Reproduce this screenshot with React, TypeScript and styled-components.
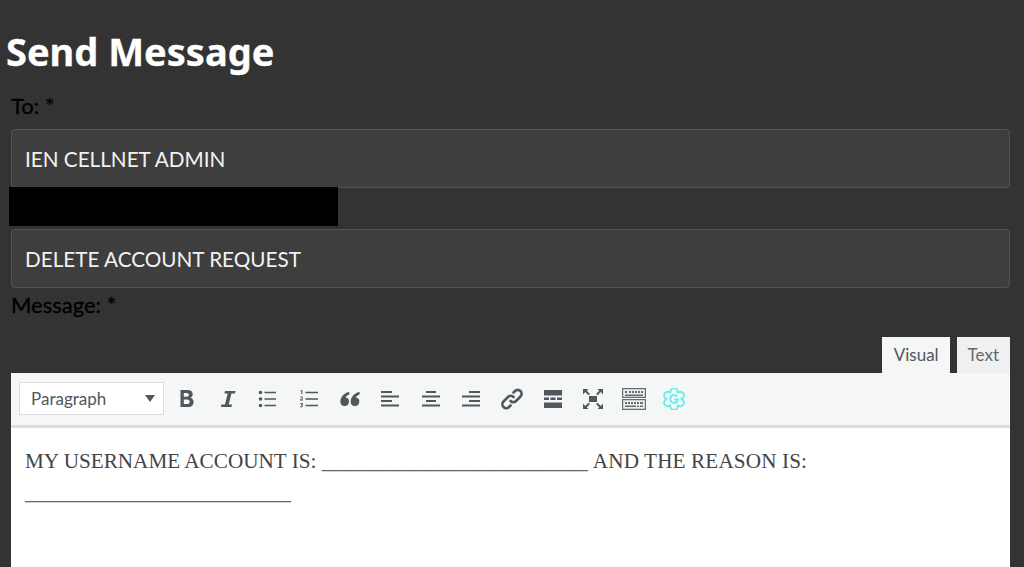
import { createGlobalStyle, styled } from "styled-components";

const GlobalStyle = createGlobalStyle`
  html, body {
    margin: 0;
    padding: 0;
    height: 100%;
    overflow: hidden;
    background: #333333;
  }
`;

const ICON = "#50575e";

const BoldIcon = () => (
  <svg width="20" height="20" viewBox="0 0 20 20" fill={ICON}>
    <path fillRule="evenodd" d="M3.500 1h7.200c3 0 5 1.600 5 4.200 0 1.700-.9 3-2.400 3.600 2.100.5 3.300 2 3.300 4.100 0 3-2.200 5.100-5.400 5.100H3.500zm3.300 2.900v3.900h2.900c1.300 0 2.200-.8 2.200-2s-.9-1.900-2.200-1.900zm0 6.500v4.700h3.400c1.500 0 2.500-.9 2.500-2.300s-1-2.400-2.500-2.400z" />
  </svg>
);

const ItalicIcon = () => (
  <svg width="20" height="20" viewBox="0 0 20 20" fill={ICON}>
    <path d="M7 2h10.500l-.6 2.400h-3.500L10.700 15.600h3.300l-.6 2.400H2.900l.6-2.400H7L9.700 4.400H6.400z" />
  </svg>
);

const BulletIcon = () => (
  <svg width="20" height="20" viewBox="0 0 20 20" fill={ICON}>
    <circle cx="2.500" cy="3.500" r="1.800" />
    <circle cx="2.500" cy="10" r="1.800" />
    <circle cx="2.500" cy="16.500" r="1.800" />
    <path d="M6.500 2.800H18v1.400H6.500zM6.500 9.300H18v1.400H6.500zM6.500 15.800H18v1.400H6.500z" />
  </svg>
);

const NumberIcon = () => (
  <svg width="20" height="20" viewBox="0 0 20 20" fill={ICON}>
    <path d="M6.500 2.800H19v1.400H6.500zM6.500 9.300H19v1.400H6.500zM6.500 15.800H19v1.400H6.500z" />
    <path d="M2 1h1.300v4.300H2.300V2.100l-.9.300zM1 7.900c.8-.6 3-.7 3 .8 0 .9-1 1.300-1.800 1.900H4v.9H1v-.8c.8-.8 2-1.300 2-2 0-.6-1-.5-1.800 0zM1.200 14H4v.7l-1 .9c1.500.2 1.300 2.800-.9 2.800-.4 0-.8-.1-1.100-.3v-.8c.7.400 1.900.400 1.900-.4 0-.5-.5-.7-1.100-.6v-.7l1-.8H1.200z" />
  </svg>
);

const QuoteIcon = () => (
  <svg width="20" height="20" viewBox="0 0 20 20" fill={ICON}>
    <path d="M9.300 3C5 3.500.4 7.500.4 12.700a4.300 4.300 0 1 0 5.200-4.200c.5-1.200 1.900-2.300 3.700-2.900z" />
    <path d="M19.600 3c-4.300.5-8.900 4.500-8.900 9.700a4.300 4.300 0 1 0 5.200-4.200c.5-1.200 1.900-2.300 3.700-2.900z" />
  </svg>
);

const AlignLeftIcon = () => (
  <svg width="20" height="20" viewBox="0 0 20 20" fill={ICON}>
    <path d="M1 2h11v2H1zM1 6.500h18v2H1zM1 11h11v2H1zM1 15.500h18v2H1z" />
  </svg>
);

const AlignCenterIcon = () => (
  <svg width="20" height="20" viewBox="0 0 20 20" fill={ICON}>
    <path d="M5 2h10v2H5zM1 6.500h18v2H1zM5 11h10v2H5zM1 15.500h18v2H1z" />
  </svg>
);

const AlignRightIcon = () => (
  <svg width="20" height="20" viewBox="0 0 20 20" fill={ICON}>
    <path d="M8 2h11v2H8zM1 6.500h18v2H1zM8 11h11v2H8zM1 15.500h18v2H1z" />
  </svg>
);

const LinkIcon = () => (
  <svg width="24" height="24" viewBox="0 0 24 24" fill="none" stroke={ICON} strokeWidth="2.600" strokeLinecap="round">
    <path d="M10.500 14a3.800 3.800 0 0 0 5.500 0l4.500-4.500a3.800 3.800 0 0 0-5.500-5.500L13.500 5.500" />
    <path d="M13.500 10a3.800 3.800 0 0 0-5.500 0l-4.500 4.500a3.800 3.800 0 0 0 5.500 5.500l1.500-1.500" />
  </svg>
);

const MoreIcon = () => (
  <svg width="20" height="20" viewBox="0 0 20 20" fill={ICON}>
    <path d="M1 1h18v5.500H1zM1 8.500h5v2.500H1zM7.500 8.500h5v2.500h-5zM14 8.500h5v2.500h-5zM1 13.500h18V19H1z" />
  </svg>
);

const FullscreenIcon = () => (
  <svg width="22" height="22" viewBox="0 0 22 22" fill={ICON}>
    <path d="M7 8h8v6H7z" />
    <path d="M1 1h5.500L4.800 2.700 8 6 6.500 7.300 3.200 4.100 1 6.500zM21 1v5.500l-2.200-2.400-3.300 3.200L14 6l3.200-3.300L15.500 1zM1 21v-5.500l2.200 2.400 3.300-3.200L8 16l-3.200 3.300L6.500 21zM21 21h-5.500l1.700-1.700L14 16l1.500-1.300 3.300 3.200 2.200-2.400z" />
  </svg>
);

const KeyboardIcon = () => (
  <svg width="24" height="22" viewBox="0 0 24 22">
    <path fill="#666d73" d="M0 0h24v10H0zM0 11h24v11H0z" />
    <path fill="#eef0f0" d="M1.200 1.200h21.600v7.600H1.200zM1.200 12.200h21.600v8.600H1.200z" />
    <path fill="#666d73" d="M3 3h2v2H3zM7 3h2v2H7zM10 3h2v2h-2zM13 3h2v2h-2zM16 3h2v2h-2zM19 3h2v2h-2zM3 6.500h18V8H3z" />
    <path fill="#666d73" d="M3 14h2v2H3zM6 14h2v2H6zM9 14h2v2H9zM12 14h2v2h-2zM15 14h2v2h-2zM18 14h3v2h-3zM3 17.500h11v1.500H3zM15 17.500h2v1.500h-2zM18 17.500h3v1.500h-3z" />
  </svg>
);

const GrammarlyIcon = () => (
  <svg width="22" height="22" viewBox="0 0 24 24" fill="none" stroke="#66eeee" strokeWidth="2">
    <path d="M15.750 5.500A4 4 0 1 1 19.500 12 4 4 0 1 1 15.750 18.500 4 4 0 1 1 8.250 18.500 4 4 0 1 1 4.500 12 4 4 0 1 1 8.250 5.500 4 4 0 1 1 15.750 5.500z" />
    <path d="M15.500 9.500a4.300 4.300 0 1 0 .8 3h-3.800" strokeWidth="2.200" />
  </svg>
);

const TOOLS = [
  { key: "bold", icon: <BoldIcon /> },
  { key: "italic", icon: <ItalicIcon /> },
  { key: "bullet", icon: <BulletIcon /> },
  { key: "number", icon: <NumberIcon /> },
  { key: "quote", icon: <QuoteIcon /> },
  { key: "left", icon: <AlignLeftIcon /> },
  { key: "center", icon: <AlignCenterIcon /> },
  { key: "right", icon: <AlignRightIcon /> },
  { key: "link", icon: <LinkIcon /> },
  { key: "more", icon: <MoreIcon /> },
  { key: "fullscreen", icon: <FullscreenIcon /> },
  { key: "keyboard", icon: <KeyboardIcon /> },
  { key: "grammarly", icon: <GrammarlyIcon /> },
];

export default function App() {
  return (
    <Page>
      <GlobalStyle />
      <Title>Send Message</Title>
      <Form>
        <Label>To: *</Label>
        <Field>IEN CELLNET ADMIN</Field>
        <Redaction />
        <Field>DELETE ACCOUNT REQUEST</Field>
        <Label $top={4}>Message: *</Label>
        <Tabs>
          <Tab $active>Visual</Tab>
          <Tab>Text</Tab>
        </Tabs>
        <Editor>
          <Toolbar>
            <Select>
              <span>Paragraph</span>
              <Caret />
            </Select>
            <Tools>
              {TOOLS.map((tool) => (
                <ToolButton key={tool.key}>{tool.icon}</ToolButton>
              ))}
            </Tools>
          </Toolbar>
          <Content>
            MY USERNAME ACCOUNT IS: <Blank>_________________________</Blank> <Tail>AND THE REASON IS:</Tail>{" "}
            <Blank>_________________________</Blank>
          </Content>
        </Editor>
      </Form>
    </Page>
  );
}

const Page = styled.div`
  height: 567px;
  overflow: hidden;
  background: #333333;
  font-family: Lato, "Liberation Sans", sans-serif;
`;

const Title = styled.h1`
  margin: 0;
  padding: 27px 0 0 6px;
  height: 66px;
  box-sizing: content-box;
  font-family: "Noto Sans", "Open Sans", sans-serif;
  font-size: 38px;
  line-height: 48px;
  font-weight: 700;
  color: #ffffff;
  -webkit-text-stroke: 0.3px #ffffff;
`;

const Form = styled.div`
  width: 999px;
  margin-left: 11px;
`;

const Label = styled.div<{ $top?: number }>`
  height: 36px;
  margin-top: ${(p) => p.$top ?? 0}px;
  font-size: 22px;
  line-height: 25px;
  color: #000000;
  -webkit-text-stroke: 0.3px #000000;
`;

const Field = styled.div`
  box-sizing: border-box;
  height: 59px;
  padding: 0 13px;
  display: flex;
  align-items: center;
  border: 1px solid #535353;
  border-radius: 4px;
  background: #3e3e3e;
  font-size: 20.7px;
  color: #f2f2f2;
`;

const Redaction = styled.div`
  width: 329px;
  height: 39px;
  margin: -1px 0 3px -2px;
  background: #000000;
`;

const Tabs = styled.div`
  display: flex;
  justify-content: flex-end;
  gap: 7px;
  height: 36px;
  margin-top: 9px;
`;

const Tab = styled.div<{ $active?: boolean }>`
  box-sizing: border-box;
  height: 36px;
  padding: ${(p) => (p.$active ? "0 11px 2px 12px" : "0 11px 2px")};
  display: flex;
  align-items: center;
  background: ${(p) => (p.$active ? "#f5f6f6" : "#f0f0f1")};
  font-size: 17px;
  color: ${(p) => (p.$active ? "#50575e" : "#646970")};
`;

const Editor = styled.div`
  background: #ffffff;
`;

const Toolbar = styled.div`
  box-sizing: border-box;
  height: 55px;
  padding: 9px 8px 0;
  display: flex;
  align-items: flex-start;
  background: #f5f6f6;
  border-bottom: 3px solid #dcdcde;
`;

const Select = styled.div`
  box-sizing: border-box;
  width: 145px;
  height: 33px;
  padding: 0 8px 0 11px;
  display: flex;
  align-items: center;
  justify-content: space-between;
  background: #ffffff;
  border: 1px solid #dcdcde;
  font-size: 17px;
  color: #50575e;
`;

const Caret = styled.i`
  width: 0;
  height: 0;
  border-left: 5px solid transparent;
  border-right: 5px solid transparent;
  border-top: 7px solid #50575e;
`;

const Tools = styled.div`
  display: flex;
  margin-left: 3px;
`;

const ToolButton = styled.div`
  width: 40.6px;
  height: 33px;
  display: flex;
  align-items: center;
  justify-content: center;
`;

const Content = styled.div`
  height: 200px;
  padding: 18px 13px 0 14px;
  font-family: "Liberation Serif", serif;
  font-size: 21.2px;
  line-height: 31px;
  color: #444444;
`;

const Blank = styled.span`
  letter-spacing: 0.04px;
  color: #666666;
`;

const Tail = styled.span`
  letter-spacing: 0.12px;
`;
